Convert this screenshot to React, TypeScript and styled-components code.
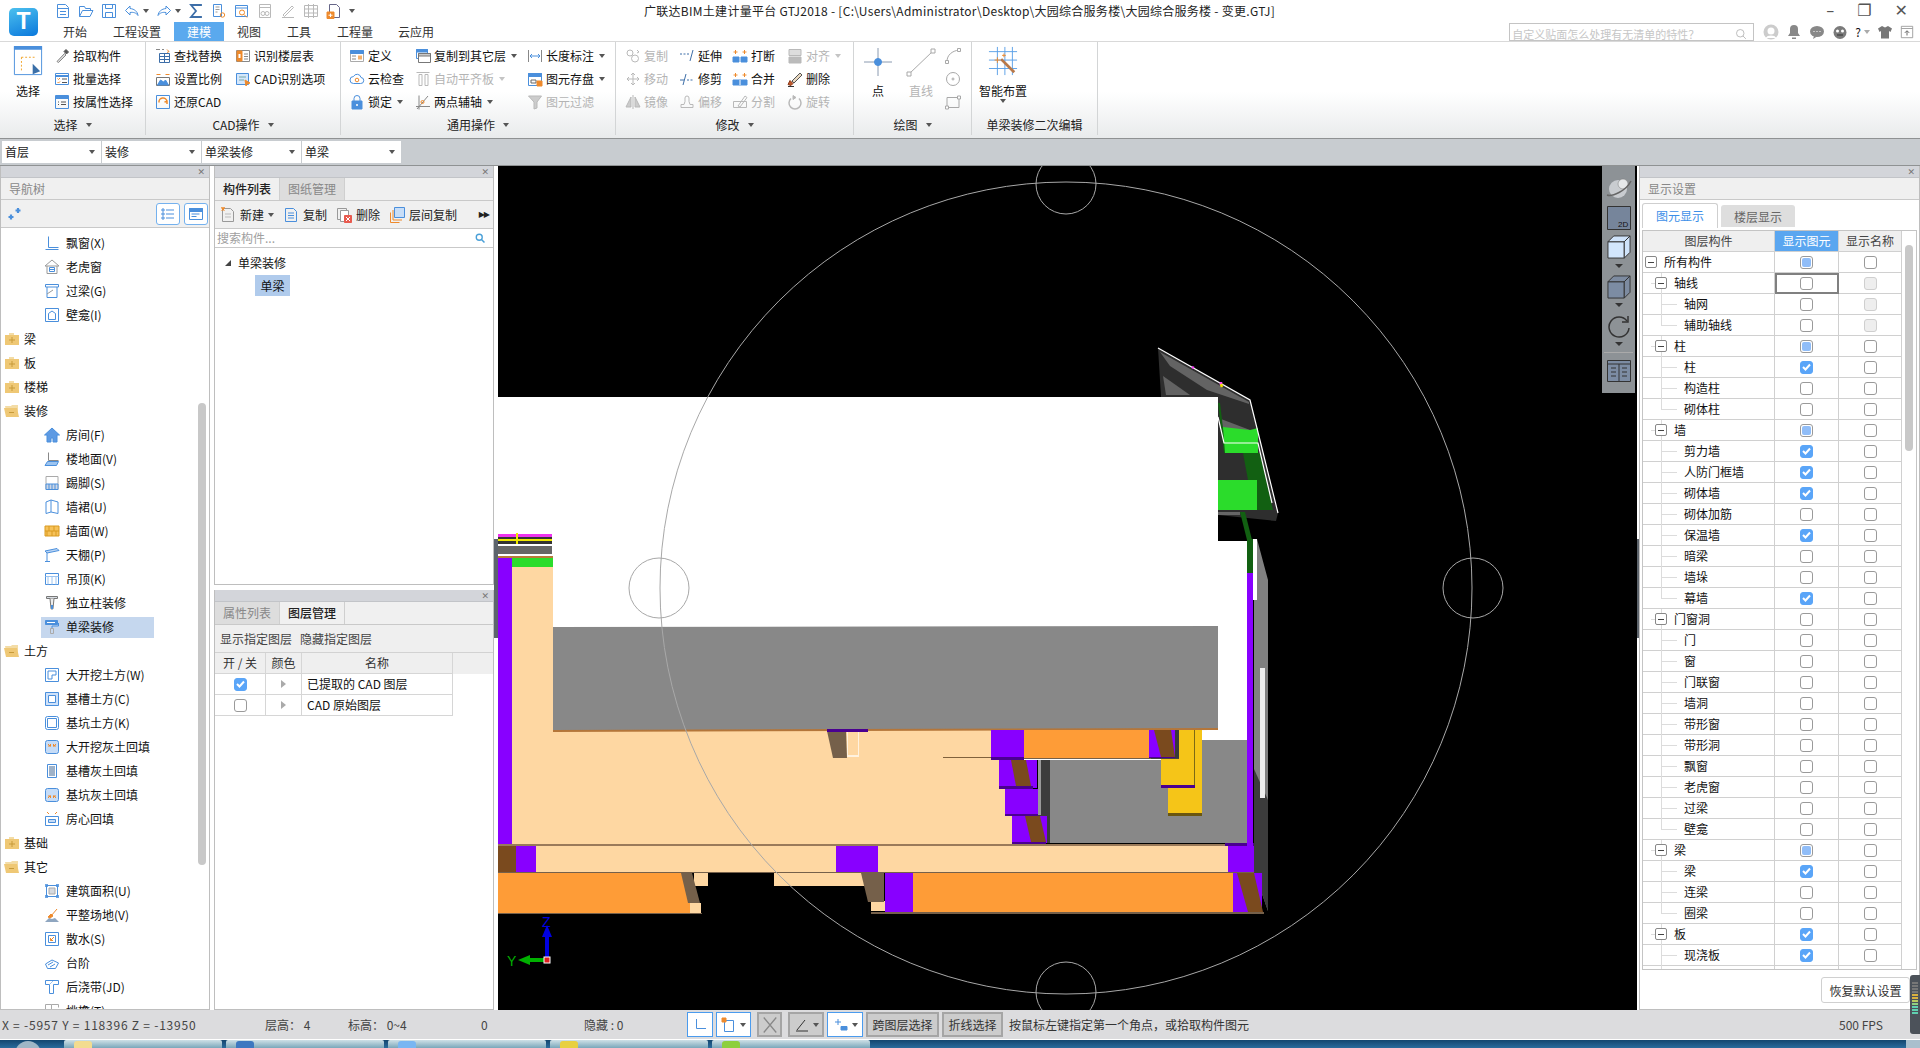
import React from "react";
import styled, { createGlobalStyle } from "styled-components";

const Global = createGlobalStyle`
  html, body { margin: 0; padding: 0; background: #fff; }
  * { box-sizing: border-box; }
`;
const B = "#4a8fdc";
const O = "#ee8a2c";
const D = "#b9b9b9";

const icons: Record<string, React.ReactNode> = {
  doc: <><path d="M2.5 1.5h8l3 3v10h-11z" /><path d="M2.5 5.5h11M5 8.5h6M5 11.5h6" /></>,
  open: <><path d="M1.5 13.5v-10h5l1 2h5v2" /><path d="M1.5 13.5l3-6h10.5l-3 6z" /></>,
  save: <><path d="M1.5 1.5h13v13h-13z" /><path d="M4.5 1.5v4h7v-4M4.5 14.5v-5h7v5" /></>,
  undo: <path d="M6 3L1.5 7.5 6 12V9.5c3-.5 6 0 8 3-.5-4-3.5-6.5-8-7z" />,
  redo: <path d="M10 3l4.5 4.5L10 12V9.5c-3-.5-6 0-8 3 .5-4 3.500-6.500 8-7z" />,
  sigma: <path d="M13 3V2H3l5 6-5 6h10v-1" strokeWidth="1.800" stroke="#3d6ea8" />,
  report: <><path d="M2.500 1.500h8v12h-8z" /><path d="M4.500 4h4M4.500 6.500h4M4.500 9h2" stroke="#999" /><circle cx="11.500" cy="12" r="2.200" stroke={O} /></>,
  query: <><path d="M1.500 2.500h12v11h-12zM1.500 5h12" /><circle cx="8" cy="9.500" r="2.500" stroke={O} /><path d="M10 11.500l3 3" stroke={O} /></>,
  calcoff: <g stroke={D}><path d="M2.500 1.500h11v13h-11zM2.500 4.500h11" /><circle cx="6" cy="10.500" r="2" /><circle cx="10" cy="10.500" r="2" /></g>,
  penoff: <g stroke={D}><path d="M3 12L12 3l1.500 1.500-9 9zM2 14.500h12" /></g>,
  gridoff: <g stroke={D}><path d="M1.500 2.500h13v11h-13zM1.500 6h13M1.500 10h13M5.500 1v14M10.500 1v14" /></g>,
  newred: <><path d="M3.500 1.500h7l3 3v10h-10z" stroke="#668" /><path d="M1 9h7v6.500H1z" fill={O} stroke={O} /><path d="M4.500 10.500v3.500M2.500 12.200h4" stroke="#fff" /></>,
  pick: <><path d="M3 13.500l7.500-8L12 7l-7.500 7.500z" stroke="#888" fill="#ddd" /><path d="M10 3.500l2.500 2.500 2-2-2.500-2.500z" fill="#555" stroke="#555" /></>,
  batch: <><path d="M1.500 2.500h13v11h-13z" /><path d="M1.500 5h13" strokeWidth="2" /><path d="M3.500 7.500l1 1 1.500-1.500M3.500 11l1 1 1.500-1.500" stroke={O} /><path d="M8 8h5M8 11.500h5" stroke="#555" /></>,
  attr: <><path d="M1.500 1.500h13v13h-13z" /><path d="M1.500 3.500h13" strokeWidth="3" /><path d="M7 8h5M7 10.500h5M4 8h1M4 10.500h1" stroke="#555" /></>,
  find: <><path d="M1 1.500h4M7 1.500h2" stroke="#888" /><path d="M12 1.500l2 2-2 1" stroke={O} /><path d="M4.500 5.500h10v9h-10zM4.500 8.500h10M4.500 11.500h10M9.500 5.500v9" stroke="#3d6ea8" /></>,
  scale: <><path d="M1.500 3.500h4M10.500 3.500h4" stroke={O} /><path d="M1.500 6.500h13v8h-13z" stroke="#777" /><path d="M2.500 14l3-5 3 2 2-2 3 5z" fill={B} /></>,
  restore: <><path d="M1.500 1.500h13v13h-13z" /><path d="M4 8.500a4 4 0 0 1 8-1M12 10L12 7.500 9.500 8" stroke={O} strokeWidth="1.500" /></>,
  floor: <><path d="M1.500 2.500h13v11h-13z" stroke="#888" /><path d="M2 3h5v10H2z" fill={O} stroke={O} /><path d="M3.500 6h2v4h-2z" fill="#fff" stroke="none" /><path d="M9 6h4M9 8.500h4M9 11h4" stroke="#888" /></>,
  cadopt: <><path d="M1.500 2.500h12v11h-12z" fill="#d5e7fb" /><path d="M4 6h7M4 9h5" stroke="#7aa" /><path d="M10 9l5 3-3 1-1 2z" fill={O} stroke={O} /></>,
  define: <><path d="M1.500 2.500h13v11h-13z" stroke="#aaa" /><path d="M1.500 2.500h13v3h-13z" fill={B} /><path d="M3 8h4M3 11h4" stroke="#888" /><path d="M9 7.500h4v4H9z" fill="#f6b16a" stroke="none" /></>,
  cloud: <><path d="M4.500 12.500h7a3 3 0 0 0 .5-6 4 4 0 0 0-7.500-1 3.500 3.500 0 0 0 0 7z" /><circle cx="8" cy="9" r="1.800" stroke={O} /></>,
  lock: <><path d="M3 7h10v8H3z" fill={B} /><path d="M5 7V4.500a3 3 0 0 1 6 0V7" /><circle cx="8" cy="11" r="1" fill="#fff" stroke="none" /></>,
  copylayer: <><path d="M1.500 1.500h11v9h-11z" /><path d="M1.500 1.500h11v2.500h-11z" fill={B} /><path d="M3.500 5.500h12v9h-12z" fill="#fff" stroke="#777" /><path d="M3.500 5.500h12v2.500h-12z" fill="#c9c9c9" stroke="#777" /></>,
  autoflat: <g stroke={D}><path d="M1.500 1.500h13M4 3.500h3v11H4zM10 3.500h3v11h-3z" /></g>,
  twopoint: <><path d="M1 12.500h14M4 1.500v14M13 2L2 15" stroke="#888" /><circle cx="7.500" cy="8" r="1.500" stroke={O} /></>,
  len: <><path d="M1.500 2v12M14.500 2v12" stroke="#888" /><path d="M3 8h10M5 6L3 8l2 2M11 6l2 2-2 2" /></>,
  store: <><path d="M1.500 2.500h13v12h-13z" /><path d="M1.500 2.500h13v3h-13z" fill={B} /><path d="M4 9h5v3H4z" stroke="#666" /><path d="M10 10h5v5h-5z" fill={O} stroke={O} /></>,
  filter: <g stroke={D}><path d="M1.500 2h13L10 8v6l-3 1V8z" fill="#ccc" /></g>,
  copyo: <g stroke={D}><circle cx="5" cy="5" r="3" /><circle cx="10" cy="10.500" r="3.500" /><path d="M12 2l2 2-2 1" /></g>,
  moveo: <g stroke={D}><path d="M8 2v12M2 8h12M6 4l2-2 2 2M6 12l2 2 2-2M4 6L2 8l2 2M12 6l2 2-2 2" /></g>,
  mirror: <g stroke={D}><path d="M8 1v14" /><path d="M6 3L1 13h5zM10 3l5 10h-5z" fill="#ccc" /></g>,
  extend2: <><path d="M1 6h2M4.500 6h2M8 6h2" stroke="#3d6ea8" /><path d="M11 13l3-11" stroke="#3d6ea8" /></>,
  trim: <><path d="M1 9h4" stroke="#3d6ea8" /><path d="M8 9h2M11.500 9h2" stroke="#3d6ea8" /><path d="M4 14l3-11" stroke="#3d6ea8" /></>,
  offset: <g stroke={D}><path d="M2 13.500h12v-3h-3l-1-3V4a2 2 0 0 0-4 0v3.500l-1 3H2z" /></g>,
  brk: <><path d="M1 9h6v5H1zM9 9h6v5H9z" fill={B} stroke={B} /><path d="M3.500 2v4M1.500 4h4M12.500 2v4M10.500 4h4" stroke={O} /></>,
  merge: <><path d="M1 9h14v5H1z" fill={B} stroke={B} /><path d="M8 9v5" stroke="#fff" /><path d="M3.500 2v4M1.500 4h4M12.500 2v4M10.500 4h4" stroke={O} /></>,
  split: <g stroke={D}><path d="M1.500 7.500h13v6h-13z" /><path d="M6 12L13 2l2 1.500L8 13z" /></g>,
  align: <g stroke={D}><path d="M2 1.500h12v6H2z" fill="#ddd" /><path d="M2 9h12v6H2z" fill="#bbb" /></g>,
  del: <><path d="M5 10L13 2l2 2-8 8z" fill="#e9d8c0" stroke="#555" /><path d="M3 9.500l3 3-2 2-3-1z" fill="#c2572a" stroke="#8a3a1a" /><path d="M1 15.500h6" stroke="#333" /></>,
  rot: <g stroke={D}><path d="M4 4.500a6 6 0 1 0 8 0" strokeWidth="1.500" /><path d="M6 1.500l3 2-3 2z" fill={D} /></g>,
  arc: <g stroke="#a8a8a8"><path d="M2 13.500C2 7 7 3 14 2" /><path d="M.5 12.500h3v3h-3zM12.500.5h3v3h-3z" fill="#fff" /></g>,
  ring: <g stroke="#a8a8a8"><circle cx="8" cy="8" r="6.500" /><circle cx="8" cy="8" r="1" /></g>,
  rectd: <g stroke="#a8a8a8"><path d="M2 3.500h12v10H2z" /><path d="M12.500 2h3v3h-3zM.5 12h3v3h-3z" fill="#fff" /></g>,
  win1: <><path d="M2.500 1.500h11v2h-11z" fill="#d8dde3" stroke="#777" /><path d="M6 3.500l1 10 1 1 1-1 1-10" fill="#eee" stroke="#777" /><path d="M7 10h2v4H7z" fill={B} stroke="none" /></>,
  roll: <><path d="M1.500 1.500h12v4h-12z" fill={B} /><path d="M3 3.500h8" stroke="#fff" /><path d="M14.500 4v3H8v2" /><path d="M6.500 9.500h3v5h-3z" stroke="#aaa" /></>,
  bay: <><path d="M4.500 1.500v11M4.500 12.500h10M1.500 14.500h13" /></>,
  dorm: <><path d="M8 1L1 7h14zM3 7v7.500h10V7" stroke="#999" /><path d="M5.500 8.500h5v4h-5zM5.500 10.500h5" /></>,
  lintel: <><path d="M1.500 1.500h13v2.500h-13z" /><path d="M3 4v10.500h10V4" /><path d="M3 11l6-4" stroke="#999" /></>,
  niche: <><path d="M1.500 1.500h13v13h-13z" /><path d="M4.500 12.500v-6L8 4l3.500 2.500v6z" /></>,
  room: <><path d="M8 1L.5 8 3 8v7h4v-4h2v4h4V8h2.500z" fill="#5d9ae3" /></>,
  floorl: <><path d="M4.500 1.500v8M4.500 9.500h10" stroke="#888" /><path d="M3.500 10.500h11l-2 4H1z" fill="#9cc4f0" /></>,
  skirt: <><path d="M2 1.500h12v13H2z" stroke="#aaa" /><path d="M2 9h12v5.500H2z" fill="#cdd6e4" /><path d="M5 9v5.500M8 9v5.500M11 9v5.500" /></>,
  dado: <><path d="M2 3l5-2 7 2v11.500L7 13l-5 1.500z" /><path d="M7 1v12" /></>,
  wallf: <><path d="M1 3h14v10H1z" fill="#f6c25a" stroke="#d99a20" /><path d="M1 8h14M5 3v5M10 3v5M3 8v5M8 8v5M12 8v5" stroke="#d99a20" /></>,
  ceil: <><path d="M1 4l12-2.500 2 2L3 6z" fill="#bcd6f5" /><path d="M3 6v8.500M1 14.500h5" /></>,
  suspend: <><path d="M1.500 2.500h13v11h-13z" /><path d="M1.500 5.500h13M4 5.500v8M8 5.500v8M12 5.500v8" stroke="#9cc4f0" /></>,
  excav: <><path d="M1.500 1.500h13v13h-13z" /><path d="M4 4h8v4H8v4H4z" fill="#fff" /></>,
  pit: <><path d="M1.500 1.500h13v13h-13z" fill="#cfe2fa" /><path d="M4.500 4.500h7v7h-7z" fill="#fff" /></>,
  pit2: <><rect x="1.500" y="1.500" width="13" height="13" rx="2" /><path d="M3.500 3.500h9v9h-9z" /></>,
  fillo: <><rect x="1.500" y="1.500" width="13" height="13" rx="2" fill="#c6dcf7" /><path d="M4 5l2.500 2.500M12 5L9.500 7.500M4 7h2.500V5M12 7H9.500V5" stroke={O} /></>,
  fills: <><path d="M3.500 1.500h9v13h-9z" /><path d="M5 3h6v10H5z" fill="#9fb2c8" stroke="none" /></>,
  filld: <><rect x="1.500" y="1.500" width="13" height="13" rx="2" fill="#c6dcf7" /><path d="M4 11l2.500-2.500M12 11L9.500 8.500M4 9h2.500v2M12 9H9.500v2" stroke={O} /></>,
  core: <><path d="M1.500 5.500h13v9h-13z" /><path d="M4.500 8.500h7v3h-7z" fill="#c6dcf7" /><path d="M3 1l2 2M13 1l-2 2" stroke={O} /></>,
  area: <><path d="M2.500 2.500h11v11h-11z" /><path d="M5 5h6v6H5z" fill="#d6d9de" stroke="#aaa" /><path d="M1 1h3v3H1zM12 1h3v3h-3zM1 12h3v3H1zM12 12h3v3h-3z" fill={B} stroke="none" opacity=".8" /></>,
  level: <><path d="M1 15l4-4 3 1 3-1 4 4z" fill="#8fa6c0" stroke="none" /><path d="M7 9l6-7" stroke={O} /><path d="M4 10l3-3 2 2-3 2z" fill={O} stroke={O} /></>,
  apron: <><path d="M1.500 1.500h13v13h-13z" /><path d="M4.500 4.500h7v7h-7z" /><path d="M10 6l-3.500 3.500M6.500 7v2.500H9" stroke={O} /></>,
  step: <><path d="M1.500 9L8 5l6.500 3-3 5.500h-8z" /><path d="M4 10l5-3M6 12l5-3" /></>,
  band: <><path d="M1.500 1.500h13v4H9.500v9h-4v-9h-4z" /><path d="M6 5l3-3" stroke="#9cc4f0" /></>,
  cor: <><path d="M1.500 1.500h6v6h-6zM1.500 7.500h6v6h-6zM7.500 1.500h7v3" stroke="#aaa" /></>,
  plusStar: <path d="M3 8.500v5M.5 11h5M10 2v5M7.500 4.500h5" strokeWidth="2.200" />,
  list: <><path d="M2 3h2v2H2zM2 7h2v2H2zM2 11h2v2H2z" /><path d="M6 4h8M6 8h8M6 12h8" /></>,
  form: <><path d="M1.500 2.500h13v11h-13z" /><path d="M1.500 2.500h13v3h-13z" fill={B} /><path d="M3.500 8h8M3.500 10.500h5" /></>,
  mnew: <><path d="M2.500 1.500h8l3 3v10h-11z" stroke="#999" /><path d="M5 7h6M5 10h6" stroke="#bbb" /><path d="M1 1h4M3 0v4M1.500 .5l3 3M4.500 .5l-3 3" stroke={O} /></>,
  mcopy: <><path d="M2.500 1.500h8l3 3v10h-11z" /><path d="M5 6h6M5 8.500h6M5 11h6" /></>,
  mdel: <><path d="M1.500 1.500h9v11h-9z" stroke="#999" /><path d="M4.500 3.500h8v11h-8z" fill="#fff" stroke="#999" /><path d="M8.500 8.500h7v7h-7z" fill="#e85a4f" stroke="#e85a4f" /><path d="M10 10l4 4M14 10l-4 4" stroke="#fff" /></>,
  mlayer: <><path d="M5.500 .5h10v10h-10z" fill="#c8def8" /><path d="M4 3v10h9M1.500 5.500v10h9" stroke={O} /></>,
  search: <><circle cx="7" cy="7" r="4" strokeWidth="1.800" stroke="#4aa0d8" /><path d="M10 10l4 4" strokeWidth="2" stroke="#4aa0d8" /></>,
  searchg: <g stroke="#aaa"><circle cx="7" cy="7" r="5" /><path d="M10.500 10.500l4 4" /></g>,
  avatar: <><circle cx="8" cy="8" r="7.500" fill="#ccc" stroke="none" /><circle cx="8" cy="7" r="3.500" fill="#fff" stroke="none" /><path d="M2.500 14a6 4 0 0 1 11 0z" fill="#fff" stroke="none" /></>,
  bell: <path d="M8 1a4 4 0 0 0-4 4v4l-2 3h12l-2-3V5a4 4 0 0 0-4-4zM6 13.500h4v1.500H6z" fill="#888" stroke="none" />,
  chat: <><ellipse cx="8" cy="7.500" rx="7" ry="5.500" fill="#888" stroke="none" /><path d="M5 12l-1 3 4-2.500z" fill="#888" stroke="none" /><path d="M4.500 7.500h1M7.500 7.500h1M10.500 7.500h1" stroke="#fff" /></>,
  monster: <><circle cx="8" cy="8.500" r="6.500" fill="#7a7a7a" stroke="none" /><circle cx="5.500" cy="7" r="1.500" fill="#fff" stroke="none" /><circle cx="10.500" cy="7" r="1.500" fill="#fff" stroke="none" /><path d="M5 11h6" stroke="#333" /></>,
  shirt: <path d="M5 2L1 4.500 2.500 8 4 7v7.500h8V7l1.500 1L15 4.500 11 2 8 3.500z" fill="#777" stroke="none" />,
  tray: <><path d="M1.500 1.500h13v13h-13z" stroke="#999" /><path d="M1.500 4h13" stroke="#999" /><path d="M8 12V7M5.500 9L8 6.500 10.500 9" stroke="#555" /></>,
  stL: <path d="M4.500 2v9.500H14" />,
  stBox: <><path d="M3.500 3.500h9v11h-9z" /><path d="M1 1h4v4H1z" fill={O} stroke={O} /></>,
  stX: <path d="M3 2l10 12M13 2L3 14" stroke="#888" />,
  stAng: <path d="M2 14h12M3 13L11 3" stroke="#333" />,
  stPlus: <><path d="M2 5h6M5 2v6" /><path d="M8 9.500h6v3.500H8z" fill={B} /></>
};

const IconSvg = styled.svg<{ $s: number }>`
  width: ${p => p.$s}px;
  height: ${p => p.$s}px;
  flex: none;
  fill: none;
  stroke: ${B};
  stroke-width: 1;
  display: block;
`;
const Icon = ({ n, s = 16 }: { n: string; s?: number }) => (
  <IconSvg $s={s} viewBox="0 0 16 16">{icons[n]}</IconSvg>
);

const Root = styled.div`
  position: relative;
  width: 1920px;
  height: 1048px;
  overflow: hidden;
  display: flex;
  flex-direction: column;
  background: #fff;
  color: #111;
  font: 12px/16px "Noto Sans CJK SC", "Liberation Sans", sans-serif;
`;

/* ---------- top ---------- */
const Header = styled.header`
  height: 42px;
  flex: none;
  display: flex;
  border-bottom: 1px solid #d9d9d9;
`;
const LogoCell = styled.div`
  width: 50px;
  flex: none;
  padding: 8px 0 0 9px;
`;
const Logo = styled.div`
  width: 29px;
  height: 28px;
  border-radius: 5px;
  background: linear-gradient(160deg, #4cc0ee, #0a78dc);
  color: #fff;
  font: 700 23px/27px "Liberation Sans", sans-serif;
  text-align: center;
`;
const HeadBody = styled.div`
  flex: 1;
  display: flex;
  flex-direction: column;
`;
const QatRow = styled.div`
  height: 22px;
  display: flex;
  align-items: center;
  padding-left: 5px;
`;
const Qat = styled.div`
  width: 589px;
  display: flex;
  align-items: center;
  gap: 7px;
`;
const QatPair = styled.span`
  display: flex;
  align-items: center;
  gap: 3px;
`;
const Title = styled.div`
  white-space: nowrap;
  color: #222;
  letter-spacing: 0.28px;
`;
const WinControls = styled.div`
  margin-left: auto;
  display: flex;
  align-items: center;
  gap: 23px;
  padding-right: 12px;
  color: #555;
  font: 16px/16px "DejaVu Sans", sans-serif;
`;
const TabsRow = styled.div`
  height: 19px;
  display: flex;
  align-items: stretch;
`;
const Tab = styled.div<{ $on?: boolean; $w: number }>`
  width: ${p => p.$w}px;
  text-align: center;
  line-height: 19px;
  color: ${p => (p.$on ? "#fff" : "#333")};
  background: ${p => (p.$on ? "#5aa9ee" : "transparent")};
`;
const HeadTools = styled.div`
  margin-left: auto;
  display: flex;
  align-items: center;
  gap: 7px;
  padding-right: 6px;
`;
const SearchBox = styled.div`
  width: 245px;
  height: 18px;
  margin-right: 2px;
  border: 1px solid #c4c4c4;
  display: flex;
  align-items: flex-end;
  justify-content: space-between;
  overflow: hidden;
  padding: 0 6px 0 2px;
  color: #c6c6c6;
  font-size: 11px;
  line-height: 12px;
`;

/* ---------- ribbon ---------- */
const Ribbon = styled.section`
  height: 97px;
  flex: none;
  display: flex;
  background: linear-gradient(#fff 0%, #fff 52%, #e9ebec 100%);
  border-bottom: 1px solid #8f9293;
`;
const Group = styled.div<{ $w: number; $pad: number }>`
  width: ${p => p.$w}px;
  flex: none;
  display: flex;
  flex-direction: column;
  border-right: 1px solid #d3d5d6;
  margin-bottom: 3px;
  padding-left: ${p => p.$pad}px;
`;
const GroupBody = styled.div`
  height: 73px;
  padding-top: 2px;
  display: flex;
`;
const GroupLabel = styled.div<{ $pad: number }>`
  height: 20px;
  margin-left: ${p => -p.$pad}px;
  display: flex;
  align-items: center;
  justify-content: center;
  gap: 8px;
  color: #222;
`;
const Col = styled.div<{ $w?: number }>`
  ${p => (p.$w ? `width: ${p.$w}px;` : "")}
  flex: none;
  display: flex;
  flex-direction: column;
`;
const SmallBtn = styled.div<{ $off?: boolean }>`
  height: 23px;
  display: flex;
  align-items: center;
  gap: 3px;
  white-space: nowrap;
  color: ${p => (p.$off ? "#b4b4b4" : "#111")};
`;
const Caret = styled.i<{ $c?: string; $ml?: number }>`
  display: inline-block;
  width: 0;
  height: 0;
  margin-left: ${p => p.$ml ?? 2}px;
  border-left: 3.5px solid transparent;
  border-right: 3.5px solid transparent;
  border-top: 4px solid ${p => p.$c ?? "#555"};
`;
const BigBtn = styled.div<{ $w: number; $off?: boolean; $mr?: number }>`
  width: ${p => p.$w}px;
  margin-right: ${p => p.$mr ?? 0}px;
  flex: none;
  display: flex;
  flex-direction: column;
  align-items: center;
  color: ${p => (p.$off ? "#b4b4b4" : "#111")};
`;
const BigGlyph = styled.div`
  height: 36px;
  padding-top: 2px;
  svg { display: block; }
`;
const BigText = styled.div`
  margin-top: 3px;
  white-space: nowrap;
`;
const Glyph = styled.svg`
  display: block;
`;

/* ---------- combos ---------- */
const ComboBar = styled.div`
  height: 27px;
  flex: none;
  display: flex;
  gap: 1px;
  padding: 2px 0 0 2px;
  background: #c8ccd0;
  border-bottom: 1px solid #8f9293;
`;
const Combo = styled.div`
  width: 99px;
  height: 22px;
  padding: 0 6px 0 3px;
  display: flex;
  align-items: center;
  justify-content: space-between;
  background: #fff;
  color: #222;
`;

/* ---------- main ---------- */
const Main = styled.main`
  height: 844px;
  flex: none;
  display: flex;
  background: #fff;
`;
const PanelColumn = styled.div`
  width: 280px;
  margin: 0 4px;
  flex: none;
  display: flex;
  flex-direction: column;
  gap: 5px;
`;
const Panel = styled.section<{ $w?: number; $h?: number }>`
  ${p => (p.$w ? `width: ${p.$w}px; flex: none;` : "")}
  ${p => (p.$h ? `height: ${p.$h}px; flex: none;` : "")}
  ${p => (!p.$w && !p.$h ? "flex: 1; min-height: 0;" : "")}
  position: relative;
  display: flex;
  flex-direction: column;
  border: 1px solid #bebebe;
  border-top: 0;
  overflow: hidden;
  background: #fff;
`;
const PanelCap = styled.div`
  height: 12px;
  flex: none;
  display: flex;
  justify-content: flex-end;
  align-items: center;
  padding-right: 4px;
  background: #d3d5da;
  border-bottom: 1px solid #c2c4c8;
  color: #777;
  font: 700 9px/10px "DejaVu Sans", sans-serif;
`;
const PanelTitle = styled.div`
  height: 22px;
  flex: none;
  padding-left: 8px;
  line-height: 21px;
  color: #888;
  background: #f0f0f0;
  border-bottom: 1px solid #c9c9c9;
`;
const NavTools = styled.div`
  height: 28px;
  flex: none;
  display: flex;
  align-items: center;
  gap: 4px;
  padding: 0 1px 0 7px;
  background: #f0f0f0;
  border-bottom: 1px solid #c9c9c9;
`;
const RoundBtn = styled.span<{ $first?: boolean }>`
  width: 24px;
  height: 22px;
  ${p => (p.$first ? "margin-left: auto;" : "")}
  display: flex;
  align-items: center;
  justify-content: center;
  border: 1px solid #74b1ee;
  border-radius: 3px;
  background: #fff;
`;
const TreeList = styled.div`
  flex: 1;
  min-height: 0;
  overflow: hidden;
  position: relative;
  padding-top: 3px;
`;
const TreeRow = styled.div<{ $group?: boolean }>`
  height: 24px;
  display: flex;
  align-items: center;
  padding-left: ${p => (p.$group ? 3 : 40)}px;
`;
const TreeInner = styled.div<{ $on?: boolean; $group?: boolean }>`
  width: 113px;
  height: 21px;
  display: flex;
  align-items: center;
  gap: ${p => (p.$group ? 4 : 6)}px;
  padding-left: ${p => (p.$group ? 0 : 3)}px;
  white-space: nowrap;
  background: ${p => (p.$on ? "#c5d7ee" : "transparent")};
`;
const ScrollThumb = styled.div<{ $l: number; $t: number; $h: number }>`
  position: absolute;
  left: ${p => p.$l}px;
  top: ${p => p.$t}px;
  width: 8px;
  height: ${p => p.$h}px;
  border-radius: 4px;
  background: #c8c8c8;
`;
const TabStrip = styled.div`
  height: 23px;
  flex: none;
  display: flex;
  background: #f0f0f0;
  border-bottom: 1px solid #c9c9c9;
`;
const PTab = styled.div<{ $on?: boolean }>`
  width: 65px;
  text-align: center;
  line-height: 22px;
  border-right: 1px solid #cfcfcf;
  background: ${p => (p.$on ? "#f0f0f0" : "#dddddd")};
  color: ${p => (p.$on ? "#222" : "#888")};
  font-weight: ${p => (p.$on ? 500 : 400)};
`;
const MidTools = styled.div`
  height: 28px;
  flex: none;
  display: flex;
  align-items: center;
  gap: 9px;
  padding: 0 4px 0 5px;
  background: #f0f0f0;
  border-bottom: 1px solid #c9c9c9;
  color: #222;
`;
const MidItem = styled.span`
  display: flex;
  align-items: center;
  gap: 4px;
`;
const More = styled.span`
  margin-left: auto;
  font: 8px/10px "DejaVu Sans", sans-serif;
  letter-spacing: -1px;
`;
const SearchRow = styled.div`
  height: 19px;
  flex: none;
  display: flex;
  align-items: center;
  justify-content: space-between;
  padding: 0 7px 0 2px;
  color: #a0a0a0;
  border-bottom: 1px solid #c9c9c9;
`;
const CompRoot = styled.div`
  display: flex;
  align-items: center;
  gap: 7px;
  height: 24px;
  margin-top: 3px;
  padding-left: 10px;
`;
const Tri = styled.i`
  width: 0;
  height: 0;
  border-left: 6px solid transparent;
  border-bottom: 6px solid #444;
`;
const CompLeaf = styled.div`
  width: 35px;
  height: 21px;
  margin-left: 40px;
  text-align: center;
  line-height: 21px;
  background: #b0cbec;
`;
const LayerTools = styled.div`
  height: 28px;
  flex: none;
  display: flex;
  align-items: center;
  gap: 8px;
  padding-left: 5px;
  color: #444;
  background: #efefef;
  border-bottom: 1px solid #d2d2d2;
`;
const LayerRow = styled.div<{ $head?: boolean }>`
  height: 21px;
  flex: none;
  display: flex;
  background: ${p => (p.$head ? "#efefef" : "#fff")};
  color: ${p => (p.$head ? "#333" : "#111")};
`;
const LayerCell = styled.div<{ $w: number; $left?: boolean }>`
  width: ${p => p.$w}px;
  flex: none;
  display: flex;
  align-items: center;
  justify-content: ${p => (p.$left ? "flex-start" : "center")};
  padding-left: ${p => (p.$left ? 5 : 0)}px;
  border-right: 1px solid #d6d6d6;
  border-bottom: 1px solid #d6d6d6;
  white-space: pre;
`;
const Check = styled.span<{ $st?: string }>`
  width: 13px;
  height: 13px;
  flex: none;
  border-radius: 3px;
  display: flex;
  align-items: center;
  justify-content: center;
  border: 1px solid ${p => (p.$st === "on" ? "#5aa5f8" : p.$st === "off" ? "#cfcfcf" : "#9a9a9a")};
  background: ${p => (p.$st === "on" ? "#5aa5f8" : p.$st === "off" ? "#eeeeee" : "#fff")};
`;
const CheckFill = styled.span`
  width: 9px;
  height: 9px;
  border-radius: 2px;
  background: #90bdf8;
`;
const Chk = ({ st }: { st?: string }) => (
  <Check $st={st}>
    {st === "on" && (
      <svg width="9" height="8" viewBox="0 0 9 8" fill="none" stroke="#fff" strokeWidth="2"><path d="M1 4l2.500 2.500L8 1.500" /></svg>
    )}
    {st === "mid" && <CheckFill />}
  </Check>
);
const OutlineArrow = styled.i`
  width: 0;
  height: 0;
  border-left: 5px solid #aaa;
  border-top: 4px solid transparent;
  border-bottom: 4px solid transparent;
`;

/* ---------- canvas ---------- */
const Canvas = styled.div`
  width: 1139px;
  margin-right: 2px;
  flex: none;
  position: relative;
  background: #000;
`;
const Scene = styled.svg`
  display: block;
  width: 1139px;
  height: 844px;
`;
const ViewBar = styled.div`
  position: absolute;
  right: 2px;
  top: 0;
  width: 33px;
  height: 227px;
  display: flex;
  flex-direction: column;
  align-items: center;
  background: #8d9296;
  color: #333;
`;
const ViewItem = styled.div<{ $mt: number }>`
  margin-top: ${p => p.$mt}px;
  line-height: 0;
  svg { display: block; }
`;
const ViewCaret = styled.i<{ $mt: number }>`
  margin-top: ${p => p.$mt}px;
  width: 0;
  height: 0;
  border-left: 4px solid transparent;
  border-right: 4px solid transparent;
  border-top: 4px solid #333;
`;
const ViewSep = styled.div`
  width: 29px;
  height: 1px;
  margin-top: 6px;
  background: #aaa;
`;
const Handle = styled.div<{ $side: string }>`
  position: absolute;
  ${p => p.$side}: -4px;
  top: 373px;
  width: 4px;
  height: 99px;
  background: #5d646c;
`;

/* ---------- right panel ---------- */
const TabRowR = styled.div`
  height: 30px;
  flex: none;
  display: flex;
  align-items: flex-start;
  gap: 3px;
  padding: 3px 0 0 2px;
`;
const RTab = styled.div<{ $on?: boolean }>`
  width: ${p => (p.$on ? 76 : 74)}px;
  height: ${p => (p.$on ? 25 : 22)}px;
  margin-top: ${p => (p.$on ? 0 : 2)}px;
  text-align: center;
  line-height: 24px;
  border-radius: 3px 3px 0 0;
  color: ${p => (p.$on ? "#3d8fe8" : "#666")};
  background: ${p => (p.$on ? "#fff" : "#dedede")};
  border: ${p => (p.$on ? "1px solid #cfcfcf" : "0")};
  border-bottom: 0;
`;
const TableBox = styled.div`
  position: relative;
  height: 740px;
  flex: none;
  margin: 0 2px;
  border: 1px solid #c4c4c4;
  overflow: hidden;
`;
const TRow = styled.div`
  height: 21px;
  display: flex;
`;
const TCell = styled.div<{ $w: number; $head?: boolean; $blue?: boolean; $focus?: boolean }>`
  position: relative;
  width: ${p => p.$w}px;
  flex: none;
  display: flex;
  align-items: center;
  justify-content: center;
  border-right: 1px solid #d0d0d0;
  border-bottom: 1px solid #d0d0d0;
  background: ${p => (p.$blue ? "#5aa6f0" : p.$head ? "#efefef" : "#fff")};
  color: ${p => (p.$blue ? "#fff" : p.$head ? "#444" : "#111")};
  ${p => (p.$focus ? "outline: 2px solid #808080; outline-offset: -2px;" : "")}
`;
const NameCell = styled(TCell)<{ $indent: number }>`
  justify-content: flex-start;
  padding-left: ${p => p.$indent}px;
  gap: 7px;
  white-space: nowrap;
`;
const Expander = styled.span`
  position: relative;
  z-index: 1;
  width: 12px;
  height: 12px;
  flex: none;
  border: 1px solid #888;
  border-radius: 2px;
  background: #fff;
  display: flex;
  align-items: center;
  justify-content: center;
  &::after {
    content: "";
    width: 6px;
    height: 1px;
    background: #444;
  }
`;
const Stem = styled.i<{ $l: number; $w: number }>`
  position: absolute;
  left: ${p => p.$l}px;
  top: 10px;
  width: ${p => p.$w}px;
  height: 1px;
  background: #dcdcdc;
`;
const Trunk = styled.i<{ $last?: boolean }>`
  position: absolute;
  left: 18px;
  top: 0;
  width: 1px;
  height: ${p => (p.$last ? 11 : 21)}px;
  background: #dcdcdc;
`;
const PanelFoot = styled.div`
  flex: 1;
  display: flex;
  justify-content: flex-end;
  padding: 7px 9px 0 0;
`;
const ResetBtn = styled.div`
  width: 89px;
  height: 26px;
  text-align: center;
  line-height: 25px;
  border: 1px solid #d0d0d0;
  border-radius: 3px;
  background: #fff;
  color: #333;
`;

/* ---------- status ---------- */
const Status = styled.footer`
  height: 29px;
  flex: none;
  display: flex;
  align-items: center;
  background: #dcdcde;
  color: #444;
  padding-left: 2px;
  white-space: nowrap;
`;
const SCell = styled.div<{ $w: number; $wide?: boolean }>`
  width: ${p => p.$w}px;
  flex: none;
  ${p => (p.$wide ? "letter-spacing: 0.78px;" : "")}
`;
const SBtn = styled.div<{ $w: number; $blue?: boolean; $mr?: number }>`
  width: ${p => p.$w}px;
  height: 25px;
  margin-right: ${p => p.$mr ?? 3}px;
  flex: none;
  display: flex;
  align-items: center;
  justify-content: center;
  gap: 3px;
  border: ${p => (p.$blue ? "1px solid #4a9bee" : "2px solid #a5a5a5")};
  background: ${p => (p.$blue ? "#fff" : "#cccccc")};
  color: #333;
`;
const Hint = styled.div`
  margin-left: 3px;
  width: 830px;
  color: #333;
`;
const Taskbar = styled.div`
  height: 9px;
  flex: none;
  display: flex;
  gap: 4px;
  overflow: hidden;
  background: linear-gradient(#14466f, #2a6b9c);
  border-top: 1px solid #fff;
`;
const TaskOrb = styled.div`
  width: 26px;
  height: 26px;
  margin: 1px 19px 0 15px;
  border-radius: 50%;
  background: #9fb6c6;
`;
const TaskBtn = styled.div`
  width: 158px;
  padding: 1px 0 0 10px;
  background: linear-gradient(#cfe0e6, #7aa7ba);
  border-radius: 2px 2px 0 0;
`;
const TaskIcon = styled.i<{ $c: string }>`
  display: block;
  width: 18px;
  height: 12px;
  border-radius: 3px 3px 0 0;
  background: ${p => p.$c};
`;
const ShowDesk = styled.div`
  margin-left: auto;
  width: 14px;
  background: #a9bfcd;
`;
const Meter = styled.div`
  position: absolute;
  left: 1910px;
  top: 975px;
  width: 10px;
  height: 59px;
  padding: 7px 2px;
  border-radius: 3px 0 0 3px;
  background: #4c525a;
  display: flex;
  flex-direction: column;
  gap: 1px;
`;
const MeterTick = styled.i<{ $c: string }>`
  height: 2px;
  background: ${p => p.$c};
`;

/* ---------- data ---------- */
type Sm = { i: string; t: string; off?: boolean; caret?: boolean };
const ribbon: { w: number; pad: number; label: string; cols?: { w?: number; items: Sm[] }[] }[] = [
  { w: 146, pad: 54, label: "选择", cols: [{ items: [{ i: "pick", t: "拾取构件" }, { i: "batch", t: "批量选择" }, { i: "attr", t: "按属性选择" }] }] },
  { w: 195, pad: 9, label: "CAD操作", cols: [
    { w: 80, items: [{ i: "find", t: "查找替换" }, { i: "scale", t: "设置比例" }, { i: "restore", t: "还原CAD" }] },
    { items: [{ i: "floor", t: "识别楼层表" }, { i: "cadopt", t: "CAD识别选项" }] }
  ] },
  { w: 275, pad: 8, label: "通用操作", cols: [
    { w: 66, items: [{ i: "define", t: "定义" }, { i: "cloud", t: "云检查" }, { i: "lock", t: "锁定", caret: true }] },
    { w: 112, items: [{ i: "copylayer", t: "复制到其它层", caret: true }, { i: "autoflat", t: "自动平齐板", off: true, caret: true }, { i: "twopoint", t: "两点辅轴", caret: true }] },
    { items: [{ i: "len", t: "长度标注", caret: true }, { i: "store", t: "图元存盘", caret: true }, { i: "filter", t: "图元过滤", off: true }] }
  ] },
  { w: 238, pad: 9, label: "修改", cols: [
    { w: 54, items: [{ i: "copyo", t: "复制", off: true }, { i: "moveo", t: "移动", off: true }, { i: "mirror", t: "镜像", off: true }] },
    { w: 53, items: [{ i: "extend2", t: "延伸" }, { i: "trim", t: "修剪" }, { i: "offset", t: "偏移", off: true }] },
    { w: 55, items: [{ i: "brk", t: "打断" }, { i: "merge", t: "合并" }, { i: "split", t: "分割", off: true }] },
    { items: [{ i: "align", t: "对齐", off: true, caret: true }, { i: "del", t: "删除" }, { i: "rot", t: "旋转", off: true }] }
  ] }
];
const SmallRow = ({ it }: { it: Sm }) => (
  <SmallBtn $off={it.off}>
    <Icon n={it.i} />
    {it.t}
    {it.caret && <Caret $c={it.off ? "#c4c4c4" : "#555"} />}
  </SmallBtn>
);

const nav: [string, string, boolean?][] = [
  ["bay", "飘窗(X)"], ["dorm", "老虎窗"], ["lintel", "过梁(G)"], ["niche", "壁龛(I)"],
  ["closed", "梁", true], ["closed", "板", true], ["closed", "楼梯", true], ["openf", "装修", true],
  ["room", "房间(F)"], ["floorl", "楼地面(V)"], ["skirt", "踢脚(S)"], ["dado", "墙裙(U)"], ["wallf", "墙面(W)"],
  ["ceil", "天棚(P)"], ["suspend", "吊顶(K)"], ["win1", "独立柱装修"], ["roll", "单梁装修"],
  ["openf", "土方", true], ["excav", "大开挖土方(W)"], ["pit", "基槽土方(C)"], ["pit2", "基坑土方(K)"],
  ["fillo", "大开挖灰土回填"], ["fills", "基槽灰土回填"], ["filld", "基坑灰土回填"], ["core", "房心回填"],
  ["closed", "基础", true], ["openf", "其它", true], ["area", "建筑面积(U)"], ["level", "平整场地(V)"],
  ["apron", "散水(S)"], ["step", "台阶"], ["band", "后浇带(JD)"], ["cor", "挑檐(T)"]
];
const Folder = ({ open }: { open: boolean }) => (
  <svg width="16" height="14" viewBox="0 0 16 14">
    {open ? (
      <><path d="M1 2h6l1-1h6v10H3z" fill="#f3dca6" /><path d="M0 4h13l2 9H2z" fill="#efc875" /><path d="M5 8.500h5" stroke="#c79a3a" /></>
    ) : (
      <><path d="M5 1h5v3H5z" fill="#f3dca6" /><path d="M1 3h14v10H1z" fill="#efc875" /><path d="M5 8h6M8 5v6" stroke="#c79a3a" /></>
    )}
  </svg>
);

type R = { n: string; lv: number; a?: string; b?: string; last?: boolean };
const rows: R[] = [
  { n: "所有构件", lv: 0, a: "mid" }, { n: "轴线", lv: 1, b: "off" }, { n: "轴网", lv: 2, b: "off" }, { n: "辅助轴线", lv: 2, b: "off", last: true },
  { n: "柱", lv: 1, a: "mid" }, { n: "柱", lv: 2, a: "on" }, { n: "构造柱", lv: 2 }, { n: "砌体柱", lv: 2, last: true },
  { n: "墙", lv: 1, a: "mid" }, { n: "剪力墙", lv: 2, a: "on" }, { n: "人防门框墙", lv: 2, a: "on" }, { n: "砌体墙", lv: 2, a: "on" },
  { n: "砌体加筋", lv: 2 }, { n: "保温墙", lv: 2, a: "on" }, { n: "暗梁", lv: 2 }, { n: "墙垛", lv: 2 }, { n: "幕墙", lv: 2, a: "on", last: true },
  { n: "门窗洞", lv: 1 }, { n: "门", lv: 2 }, { n: "窗", lv: 2 }, { n: "门联窗", lv: 2 }, { n: "墙洞", lv: 2 }, { n: "带形窗", lv: 2 }, { n: "带形洞", lv: 2 },
  { n: "飘窗", lv: 2 }, { n: "老虎窗", lv: 2 }, { n: "过梁", lv: 2 }, { n: "壁龛", lv: 2, last: true },
  { n: "梁", lv: 1, a: "mid" }, { n: "梁", lv: 2, a: "on" }, { n: "连梁", lv: 2 }, { n: "圈梁", lv: 2, last: true },
  { n: "板", lv: 1, a: "on" }, { n: "现浇板", lv: 2, a: "on" }, { n: "", lv: 2, a: "on" }
];

const Poly = ({ p, f }: { p: string; f: string }) => <polygon points={p} fill={f} />;
const Rc = ({ x, y, x2, y2, f }: { x: number; y: number; x2: number; y2: number; f: string }) => (
  <rect x={x} y={y} width={x2 - x} height={y2 - y} fill={f} />
);
const PEACH = "#fed7a2";
const ORANGE = "#fe9c37";
const PURPLE = "#8800ff";
const DPURPLE = "#4a0090";
const BROWN = "#7a4a1e";
const TAUPE = "#75604a";
const GRAY = "#888888";
const YEL = "#f5c518";
const GRN = "#2bdc2b";
const DGRN = "#126012";

const SceneArt = () => (
  <Scene viewBox="498 166 1139 844">
    {/* roof */}
    <Poly p="1158,348 1250,400 1278,513 1276,521 1218,515 1218,541 1170,541" f="#2e2e2e" />
    <Poly p="1160,352 1249,402 1249,404 1207,390 1170,366" f="#636363" />
    <Poly p="1163,376 1190,395 1166,395" f="#636363" />
    <Poly p="1221,419 1250,430 1223,430" f="#636363" />
    <Poly p="1218,403 1220,403 1226,453 1224,453" f={DGRN} />
    <Poly p="1223,427 1250,430 1258,428 1258,453 1225,453" f={GRN} />
    <Poly p="1243,453 1260,453 1273,510 1257,510 1257,480 1248,480" f={DGRN} />
    <Rc x={1218} y={480} x2={1257} y2={510} f={GRN} />
    <Rc x={1218} y={512} x2={1240} y2={515} f="#666" />
    <Poly p="1240,512 1245,512 1252,540 1247,540" f={DGRN} />
    <path d="M1158 348L1250 400L1278 513M1218 417L1224 443H1258L1272 503" stroke="#fff" strokeWidth="1.200" fill="none" />
    <path d="M1192 367l2 1M1221 382v3" stroke="#ff44ff" strokeWidth="2.500" fill="none" />
    <path d="M1221 384l1 3" stroke="#f0e000" strokeWidth="2.500" fill="none" />
    {/* white */}
    <Rc x={498} y={397} x2={1218} y2={760} f="#fff" />
    <Rc x={1218} y={541} x2={1247} y2={760} f="#fff" />
    <Rc x={1253} y={539} x2={1257} y2={600} f="#fff" />
    {/* left strip */}
    <Rc x={498} y={534} x2={552} y2={537} f="#ee33ee" />
    <Rc x={498} y={537} x2={552} y2={544} f="#333" />
    <Rc x={498} y={539} x2={552} y2={541} f="#f0e800" />
    <Rc x={516} y={533} x2={518} y2={544} f="#f0e800" />
    <Rc x={498} y={546} x2={552} y2={554} f="#666" />
    <Rc x={498} y={558} x2={512} y2={844} f={PURPLE} />
    <Rc x={512} y={567} x2={553} y2={844} f={PEACH} />
    <Rc x={512} y={558} x2={553} y2={567} f={GRN} />
    <Rc x={498} y={556} x2={553} y2={558} f="#b87a3a" />
    {/* walls */}
    <Rc x={553} y={730} x2={1013} y2={844} f={PEACH} />
    <Poly p="553,627 1218,626 1218,729 553,731" f={GRAY} />
    <Poly p="553,730 1218,728 1218,730 553,732" f="#b4763a" />
    <Rc x={847} y={731} x2={859} y2={757} f="#fff2df" />
    <Rc x={848} y={732} x2={858} y2={755} f={PEACH} />
    <Poly p="827,731 846,731 847,758 833,758" f={TAUPE} />
    <Rc x={827} y={729} x2={868} y2={732} f={DPURPLE} />
    <Rc x={943} y={757} x2={991} y2={758} f="#80613c" />
    <Rc x={991} y={730} x2={1024} y2={759} f={PURPLE} />
    <Rc x={991} y={757} x2={1024} y2={760} f={DPURPLE} />
    <Rc x={1024} y={730} x2={1151} y2={758} f={ORANGE} />
    <Rc x={1149} y={730} x2={1175} y2={757} f={PURPLE} />
    <Poly p="1154,730 1171,730 1175,757 1161,757" f={BROWN} />
    <Rc x={1149} y={757} x2={1175} y2={759} f={DPURPLE} />
    <Rc x={1175} y={730} x2={1179} y2={759} f="#3a3a3a" />
    <Rc x={1151} y={758} x2={1179} y2={759} f="#444" />
    <Rc x={1024} y={758} x2={1151} y2={759} f={TAUPE} />
    <Rc x={1202} y={740} x2={1247} y2={760} f={GRAY} />
    <Rc x={1050} y={760} x2={1247} y2={843} f={GRAY} />
    <Rc x={1038} y={760} x2={1050} y2={843} f="#3c3c3c" />
    <Rc x={1038} y={760} x2={1041} y2={815} f="#999" />
    <Rc x={999} y={760} x2={1037} y2={788} f={PURPLE} />
    <Poly p="1011,760 1026,760 1031,786 1016,786" f={BROWN} />
    <Rc x={999} y={786} x2={1033} y2={789} f={DPURPLE} />
    <Rc x={1005} y={789} x2={1038} y2={815} f={PURPLE} />
    <Rc x={1005} y={814} x2={1038} y2={816} f={DPURPLE} />
    <Rc x={1012} y={816} x2={1047} y2={843} f={PURPLE} />
    <Poly p="1025,816 1040,816 1046,842 1031,842" f={BROWN} />
    <Rc x={1012} y={842} x2={1046} y2={844} f={DPURPLE} />
    <Rc x={1161} y={759} x2={1195} y2={785} f={YEL} />
    <Rc x={1179} y={730} x2={1195} y2={760} f={YEL} />
    <Rc x={1195} y={730} x2={1202} y2={788} f={YEL} />
    <Rc x={1168} y={788} x2={1202} y2={814} f={YEL} />
    <Rc x={1194} y={730} x2={1195} y2={785} f="#7c6a15" />
    <Rc x={1161} y={785} x2={1195} y2={788} f={DPURPLE} />
    <Rc x={1168} y={813} x2={1202} y2={816} f="#6a5610" />
    {/* band */}
    <Rc x={498} y={844} x2={1254} y2={846} f="#9a7a5a" />
    <Rc x={536} y={846} x2={1228} y2={872} f={PEACH} />
    <Rc x={498} y={846} x2={517} y2={872} f={BROWN} />
    <Rc x={516} y={846} x2={536} y2={872} f={PURPLE} />
    <Rc x={836} y={846} x2={878} y2={872} f={PURPLE} />
    <Rc x={1228} y={846} x2={1254} y2={872} f={PURPLE} />
    <Rc x={498} y={872} x2={1254} y2={873} f={TAUPE} />
    <Rc x={1225} y={843} x2={1254} y2={846} f={DPURPLE} />
    {/* right column */}
    <Rc x={1247} y={573} x2={1253} y2={872} f={PURPLE} />
    <Rc x={1247} y={539} x2={1253} y2={573} f={DGRN} />
    <Poly p="1257,539 1268,580 1268,911 1254,871 1254,600 1257,600" f="#808080" />
    <Poly p="1254,769 1268,800 1268,911 1254,871" f="#3c3c3c" />
    <Rc x={1260} y={668} x2={1265} y2={798} f="#eee" />
    {/* bottom */}
    <Rc x={498} y={873} x2={691} y2={913} f={ORANGE} />
    <Rc x={690} y={903} x2={701} y2={913} f={PEACH} />
    <Rc x={694} y={873} x2={708} y2={886} f={PEACH} />
    <Poly p="681,873 692,873 700,903 688,903" f={TAUPE} />
    <Rc x={498} y={913} x2={702} y2={914} f={TAUPE} />
    <Rc x={774} y={873} x2={865} y2={886} f={PEACH} />
    <Rc x={871} y={901} x2={885} y2={911} f={PEACH} />
    <Poly p="861,873 884,873 884,902 868,902" f={TAUPE} />
    <Rc x={885} y={873} x2={913} y2={912} f={PURPLE} />
    <Rc x={913} y={873} x2={1233} y2={912} f={ORANGE} />
    <Rc x={1233} y={873} x2={1262} y2={912} f={PURPLE} />
    <Poly p="1237,873 1254,873 1263,912 1248,912" f={BROWN} />
    <Rc x={871} y={912} x2={1264} y2={914} f={TAUPE} />
    <g fill="none" stroke="#a8a8a8" strokeWidth="1">
      <circle cx="1066" cy="588" r="406" />
      <circle cx="659" cy="588" r="30" />
      <circle cx="1473" cy="588" r="30" />
      <circle cx="1066" cy="184" r="30" />
      <circle cx="1066" cy="992" r="30" />
    </g>
    <path d="M547 960V935" stroke="#0000e0" strokeWidth="4" />
    <polygon points="547,925 542,937 552,937" fill="#0000e0" />
    <path d="M547 960H528" stroke="#00b000" strokeWidth="4" />
    <polygon points="518,960 530,955 530,965" fill="#00b000" />
    <rect x="544" y="957" width="6" height="6" fill="#e02020" stroke="#fff" />
    <text x="542" y="927" fill="#0000e0" fontSize="14" fontFamily="Liberation Sans">Z</text>
    <text x="507" y="966" fill="#00b000" fontSize="14" fontFamily="Liberation Sans">Y</text>
  </Scene>
);

const Orb = () => (
  <svg width="26" height="22" viewBox="0 0 26 22">
    <ellipse cx="12" cy="12" rx="9" ry="9" fill="#c9ccd0" />
    <circle cx="17" cy="7" r="5" fill="#e6e8ea" stroke="#777" strokeWidth=".5" />
    <path d="M1 18C6 20 20 14 25 4" stroke="#666" fill="none" strokeWidth="1.500" />
  </svg>
);
const Box3 = ({ c, light }: { c: string; light?: boolean }) => (
  <svg width="24" height="24" viewBox="0 0 25 25" stroke="#333" fill="none">
    <path d="M1 7h17v17H1z" fill={c} />
    <path d="M1 7l6-6h17l-6 6zM18 7l6-6v17l-6 6z" fill={light ? "#cfe3fa" : "#7d8ba0"} />
  </svg>
);

export default function App() {
  return (
    <Root>
      <Global />
      <Header>
        <LogoCell><Logo>T</Logo></LogoCell>
        <HeadBody>
          <QatRow>
            <Qat>
              <Icon n="doc" /><Icon n="open" /><Icon n="save" />
              <QatPair><Icon n="undo" /><Caret $ml={0} /></QatPair>
              <QatPair><Icon n="redo" /><Caret $ml={0} /></QatPair>
              <Icon n="sigma" /><Icon n="report" /><Icon n="query" /><Icon n="calcoff" /><Icon n="penoff" /><Icon n="gridoff" /><Icon n="newred" />
              <Caret $ml={0} />
            </Qat>
            <Title>广联达BIM土建计量平台 GTJ2018 - [C:\Users\Administrator\Desktop\大园综合服务楼\大园综合服务楼 - 变更.GTJ]</Title>
            <WinControls><span>–</span><span>❐</span><span>✕</span></WinControls>
          </QatRow>
          <TabsRow>
            <Tab $w={50}>开始</Tab>
            <Tab $w={74}>工程设置</Tab>
            <Tab $on $w={50}>建模</Tab>
            <Tab $w={50}>视图</Tab>
            <Tab $w={50}>工具</Tab>
            <Tab $w={62}>工程量</Tab>
            <Tab $w={60}>云应用</Tab>
            <HeadTools>
              <SearchBox>自定义贴面怎么处理有无清单的特性？<Icon n="searchg" s={12} /></SearchBox>
              <Icon n="avatar" /><Icon n="bell" /><Icon n="chat" /><Icon n="monster" />
              <QatPair>?<Caret $ml={0} $c="#aaa" /></QatPair>
              <Icon n="shirt" /><Icon n="tray" s={14} />
            </HeadTools>
          </TabsRow>
        </HeadBody>
      </Header>

      <Ribbon>
        {ribbon.map((g, gi) => (
          <Group key={g.label} $w={g.w} $pad={gi === 0 ? 13 : g.pad}>
            <GroupBody>
              {gi === 0 && (
                <BigBtn $w={30} $mr={11}>
                  <BigGlyph>
                    <Glyph width="30" height="30" viewBox="0 0 30 32" fill="none">
                      <path d="M.5.5h29v30H.5z" stroke={B} fill="#fff" />
                      <path d="M0 0h30v4H0z" fill={B} />
                      <path d="M8 12h16M8 12v16" stroke="#f0a020" strokeDasharray="2 2" />
                      <path d="M20 19l8 8-8 3z" fill="#3a6fa8" />
                    </Glyph>
                  </BigGlyph>
                  <BigText>选择</BigText>
                </BigBtn>
              )}
              {g.cols!.map((c, i) => (
                <Col key={i} $w={c.w}>
                  {c.items.map(it => <SmallRow key={it.t} it={it} />)}
                </Col>
              ))}
            </GroupBody>
            <GroupLabel $pad={gi === 0 ? 13 : g.pad}>{g.label}<Caret $ml={0} /></GroupLabel>
          </Group>
        ))}
        <Group $w={118} $pad={8}>
          <GroupBody>
            <BigBtn $w={32} $mr={11}>
              <BigGlyph>
                <Glyph width="32" height="32" viewBox="0 0 32 32" stroke="#8a9ab0" fill="none">
                  <path d="M16 2v28M2 16h28" />
                  <circle cx="16" cy="16" r="3.500" fill={B} stroke={B} />
                </Glyph>
              </BigGlyph>
              <BigText>点</BigText>
            </BigBtn>
            <BigBtn $w={32} $off $mr={8}>
              <BigGlyph>
                <Glyph width="30" height="32" viewBox="0 0 30 32" stroke="#a8a8a8" fill="#fff">
                  <path d="M3 28L27 5" />
                  <path d="M1 26h4v4H1zM25 3h4v4h-4z" />
                </Glyph>
              </BigGlyph>
              <BigText>直线</BigText>
            </BigBtn>
            <Col>
              <SmallBtn><Icon n="arc" /></SmallBtn>
              <SmallBtn><Icon n="ring" /></SmallBtn>
              <SmallBtn><Icon n="rectd" /></SmallBtn>
            </Col>
          </GroupBody>
          <GroupLabel $pad={8}>绘图<Caret $ml={0} /></GroupLabel>
        </Group>
        <Group $w={126} $pad={7}>
          <GroupBody>
            <BigBtn $w={48}>
              <BigGlyph>
                <Glyph width="30" height="30" viewBox="0 0 32 32" stroke="#5aa0e8" fill="none">
                  <path d="M1 6h30M1 15h30M1 24h30M10 1v30M18 1v30M26 1v30" />
                  <path d="M14 14l14 14" stroke="#b8794a" strokeWidth="3" />
                  <path d="M10 12v6M7 15h6M17 8v4M15 10h4" stroke={O} />
                </Glyph>
              </BigGlyph>
              <BigText>智能布置</BigText>
              <Caret $ml={0} />
            </BigBtn>
          </GroupBody>
          <GroupLabel $pad={7}>单梁装修二次编辑</GroupLabel>
        </Group>
      </Ribbon>

      <ComboBar>
        {["首层", "装修", "单梁装修", "单梁"].map(t => (
          <Combo key={t}>{t}<Caret $ml={0} /></Combo>
        ))}
      </ComboBar>

      <Main>
        <Panel $w={210}>
          <PanelCap>✕</PanelCap>
          <PanelTitle>导航树</PanelTitle>
          <NavTools>
            <Icon n="plusStar" />
            <RoundBtn $first><Icon n="list" /></RoundBtn>
            <RoundBtn><Icon n="form" /></RoundBtn>
          </NavTools>
          <TreeList>
            {nav.map(([i, t, g]) => (
              <TreeRow key={t + i} $group={g}>
                <TreeInner $group={g} $on={t === "单梁装修"}>
                  {g ? <Folder open={i === "openf"} /> : <Icon n={i} />}
                  {t}
                </TreeInner>
              </TreeRow>
            ))}
            <ScrollThumb $l={197} $t={175} $h={462} />
          </TreeList>
        </Panel>

        <PanelColumn>
          <Panel $h={419}>
            <PanelCap>✕</PanelCap>
            <TabStrip><PTab $on>构件列表</PTab><PTab>图纸管理</PTab></TabStrip>
            <MidTools>
              <MidItem><Icon n="mnew" />新建<Caret $ml={0} /></MidItem>
              <MidItem><Icon n="mcopy" />复制</MidItem>
              <MidItem><Icon n="mdel" />删除</MidItem>
              <MidItem><Icon n="mlayer" />层间复制</MidItem>
              <More>▶▶</More>
            </MidTools>
            <SearchRow>搜索构件...<Icon n="search" s={12} /></SearchRow>
            <CompRoot><Tri />单梁装修</CompRoot>
            <CompLeaf>单梁</CompLeaf>
          </Panel>
          <Panel>
            <PanelCap>✕</PanelCap>
            <TabStrip><PTab>属性列表</PTab><PTab $on>图层管理</PTab></TabStrip>
            <LayerTools><span>显示指定图层</span><span>隐藏指定图层</span></LayerTools>
            <LayerRow $head><LayerCell $w={51}>开 / 关</LayerCell><LayerCell $w={36}>颜色</LayerCell><LayerCell $w={151}>名称</LayerCell></LayerRow>
            <LayerRow><LayerCell $w={51}><Chk st="on" /></LayerCell><LayerCell $w={36}><OutlineArrow /></LayerCell><LayerCell $w={151} $left>已提取的 CAD 图层</LayerCell></LayerRow>
            <LayerRow><LayerCell $w={51}><Chk /></LayerCell><LayerCell $w={36}><OutlineArrow /></LayerCell><LayerCell $w={151} $left>CAD 原始图层</LayerCell></LayerRow>
          </Panel>
        </PanelColumn>

        <Canvas>
          <SceneArt />
          <ViewBar>
            <ViewItem $mt={11}><Orb /></ViewItem>
            <ViewItem $mt={7}>
              <svg width="24" height="24" viewBox="0 0 24 24"><path d="M.5.5h23v23H.5z" fill="#76859b" stroke="#333" /><text x="11" y="21" fontSize="8" fill="#111" fontFamily="Liberation Sans">2D</text></svg>
            </ViewItem>
            <ViewItem $mt={5}><Box3 c="#d2e6fc" light /></ViewItem>
            <ViewCaret $mt={5} />
            <ViewItem $mt={7}><Box3 c="#7c8ca3" /></ViewItem>
            <ViewCaret $mt={4} />
            <ViewItem $mt={8}>
              <svg width="24" height="24" viewBox="0 0 24 24" fill="none" stroke="#333" strokeWidth="1.500"><path d="M20 6a10 10 0 1 0 2 7" /><path d="M21 1v6h-6" /></svg>
            </ViewItem>
            <ViewCaret $mt={3} />
            <ViewSep />
            <ViewItem $mt={5}>
              <svg width="24" height="24" viewBox="0 0 24 24" stroke="#333" fill="#7c8ca3"><path d="M.5 2.500h23v21H.5z" /><path d="M.5 6h23M12 6v17M4 10h5M4 14h5M4 18h5M15 10h5M15 14h5M15 18h5" /></svg>
            </ViewItem>
          </ViewBar>
          <Handle $side="left" />
          <Handle $side="right" />
        </Canvas>

        <Panel $w={281}>
          <PanelCap>✕</PanelCap>
          <PanelTitle>显示设置</PanelTitle>
          <TabRowR><RTab $on>图元显示</RTab><RTab>楼层显示</RTab></TabRowR>
          <TableBox>
            <TRow>
              <TCell $w={132} $head>图层构件</TCell>
              <TCell $w={64} $blue>显示图元</TCell>
              <TCell $w={63} $head>显示名称</TCell>
            </TRow>
            {rows.map((r, i) => (
              <TRow key={i}>
                <NameCell $w={132} $indent={r.lv === 0 ? 2 : r.lv === 1 ? 12 : 41}>
                  {r.lv > 0 && <Trunk $last={r.last} />}
                  {r.lv === 2 && <Stem $l={18} $w={16} />}
                  {r.lv === 1 && <Stem $l={8} $w={6} />}
                  {r.lv < 2 && <Expander />}
                  {r.n}
                </NameCell>
                <TCell $w={64} $focus={i === 1}><Chk st={r.a} /></TCell>
                <TCell $w={63}><Chk st={r.b} /></TCell>
              </TRow>
            ))}
            <ScrollThumb $l={262} $t={14} $h={206} />
          </TableBox>
          <PanelFoot><ResetBtn>恢复默认设置</ResetBtn></PanelFoot>
        </Panel>
      </Main>

      <Status>
        <SCell $w={263} $wide>X = -5957 Y = 118396 Z = -13950</SCell>
        <SCell $w={83}>层高： 4</SCell>
        <SCell $w={133}>标高： 0~4</SCell>
        <SCell $w={103}>0</SCell>
        <SCell $w={103}>隐藏 : 0</SCell>
        <SBtn $w={26} $blue><Icon n="stL" /></SBtn>
        <SBtn $w={35} $blue $mr={6}><Icon n="stBox" /><Caret $ml={0} /></SBtn>
        <SBtn $w={25} $mr={6}><Icon n="stX" s={20} /></SBtn>
        <SBtn $w={36}><Icon n="stAng" /><Caret $ml={0} /></SBtn>
        <SBtn $w={36} $blue><Icon n="stPlus" /><Caret $ml={0} /></SBtn>
        <SBtn $w={73}>跨图层选择</SBtn>
        <SBtn $w={61}>折线选择</SBtn>
        <Hint>按鼠标左键指定第一个角点，或拾取构件图元</Hint>
        <SCell $w={60}>500 FPS</SCell>
      </Status>
      <Taskbar>
        <TaskOrb />
        <TaskBtn><TaskIcon $c="#f3dc8f" /></TaskBtn>
        <TaskBtn><TaskIcon $c="#3d78c0" /></TaskBtn>
        <TaskBtn><TaskIcon $c="#79b6f2" /></TaskBtn>
        <TaskBtn><TaskIcon $c="#e8d040" /></TaskBtn>
        <TaskBtn><TaskIcon $c="#8ccf3c" /></TaskBtn>
        <ShowDesk />
      </Taskbar>
      <Meter>
        {["#777","#777","#777","#777","#d8b040","#d8b040","#b8c860","#8fd080","#60d0b0","#60d0b0","#60d0b0"].map((c, i) => <MeterTick key={i} $c={c} />)}
      </Meter>
    </Root>
  );
}
